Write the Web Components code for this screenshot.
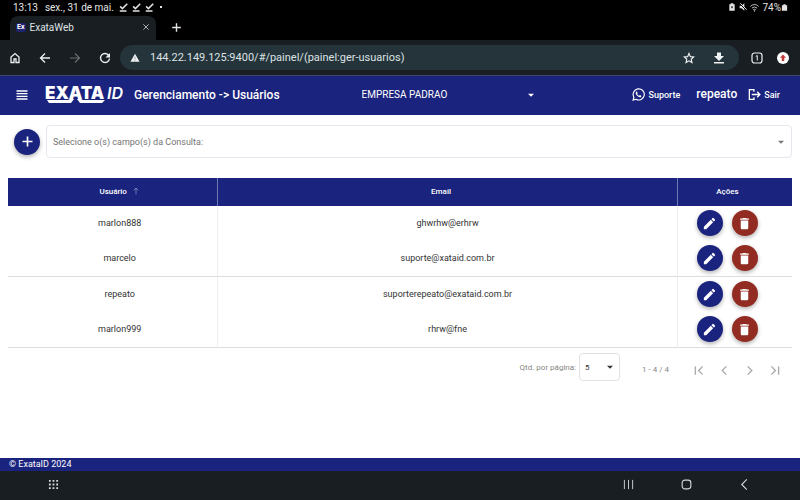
<!DOCTYPE html>
<html lang="pt-BR">
<head>
<meta charset="utf-8">
<meta name="viewport" content="width=device-width, initial-scale=1">
<title>ExataWeb</title>
<style>
  html, body { margin: 0; min-height: 100%; }
  body {
    --primary: #1a237e;
    --chrome: #191e22;
    --danger: #922b21;
    display: flex;
    background: #fff;
    color: #333;
    font-family: Roboto, "Liberation Sans", sans-serif;
    font-size: 9px;
  }
</style>
</head>
<body>
<tablet-screen></tablet-screen>

<script>
const define = (name, html, setup) => {
  const template = document.createElement('template');
  template.innerHTML = html;
  customElements.define(name, class extends HTMLElement {
    constructor() {
      super();
      this.attachShadow({ mode: 'open' }).append(template.content.cloneNode(true));
    }
    connectedCallback() { if (setup) setup(this, this.shadowRoot); }
  });
};

const ICONS = {
  home: '<path d="M4 21V10l8-7 8 7v11h-6v-7h-4v7z" fill="none" stroke="currentColor" stroke-width="2.600"/>',
  back: '<path d="M22 12H3M12 3l-9 9 9 9" fill="none" stroke="currentColor" stroke-width="2.600"/>',
  forward: '<path d="M2 12h19M12 3l9 9-9 9" fill="none" stroke="currentColor" stroke-width="2.200"/>',
  reload: '<path d="M19.5 7A9 9 0 1 0 21 13" fill="none" stroke="currentColor" stroke-width="2.800"/><path d="M22 2v9h-9z" fill="currentColor"/>',
  warning: '<path d="M12 2 1 21h22z" fill="currentColor"/><path d="M12 9v6M12 16.500v2" stroke="#24343a" stroke-width="1"/>',
  star: '<path d="m12 2.800 2.700 6.400 6.900.6-5.200 4.600 1.500 6.800-5.900-3.600-5.900 3.600 1.500-6.800L2.400 9.800l6.900-.6z" fill="none" stroke="currentColor" stroke-width="2.300"/>',
  download: '<path d="M8 1h8v7h6L12 18 2 8h6zM2 20h20v3H2z" fill="currentColor"/>',
  tabs: '<rect x="2" y="2" width="20" height="20" rx="5" fill="none" stroke="currentColor" stroke-width="2.400"/><path d="m9.500 9 3-2v10" fill="none" stroke="currentColor" stroke-width="2"/>',
  update: '<circle cx="12" cy="12" r="12" fill="#fff"/><path d="m12 5 6 6.500h-3.500V18h-5v-6.500H6z" fill="#c5393c"/>',
  close: '<path d="m4 4 16 16M20 4 4 20" stroke="currentColor" stroke-width="2.200"/>',
  plus: '<path d="M12 4v16M4 12h16" stroke="currentColor" stroke-width="2.600"/>',
  check: '<path d="m3 9 6 6L22 2M2 21.500h18" fill="none" stroke="currentColor" stroke-width="4"/>',
  battery: '<path d="M8 1h8v3h5v19H3V4h5z" fill="currentColor"/>',
  saver: '<path d="M8 1h8v3h4v19H4V4h4z" fill="currentColor"/><path d="M12 9v7M9 12.500h6" stroke="#000" stroke-width="2"/>',
  mute: '<path d="M2 8h6l8-7v22l-8-7H2z" fill="currentColor"/><path d="m2 2 20 20" stroke="#000" stroke-width="3"/><path d="m4 1 19 19" stroke="currentColor" stroke-width="3"/>',
  wifi: '<path d="M1 9q11-10 22 0M5 13.500q7-6 14 0M8.500 18q3.500-3 7 0" fill="none" stroke="currentColor" stroke-width="2.200"/><circle cx="12" cy="21" r="1.800" fill="currentColor"/>',
  menu: '<path d="M1 4h22M1 9.300h22M1 14.700h22M1 20h22" stroke="currentColor" stroke-width="2.600"/>',
  caret: '<path d="M3 8h18l-9 9z" fill="currentColor"/>',
  whatsapp: '<path d="M2 22.300 3.500 17A10.300 10.300 0 1 1 7.300 20.800z" fill="none" stroke="currentColor" stroke-width="2.100"/><path d="M7.300 7.600c.8-1.200 1.900-1.200 2.300-.2l.8 2-.9 1.500c.9 1.700 2 2.700 3.700 3.500l1.400-1.300 2.300 1.200c.8.5.2 2-.8 2.600-1.200.7-3.500.2-5.700-1.600-2.500-2.100-4.600-5.300-3.100-7.700z" fill="currentColor"/>',
  logout: '<path d="M11 7V3H2.500v18H11v-4M7 12h15M17 7l5 5-5 5" fill="none" stroke="currentColor" stroke-width="2.400"/>',
  sort: '<path d="M12 22V3M5 10l7-7 7 7" fill="none" stroke="currentColor" stroke-width="2.300"/>',
  pencil: '<path d="M3 17.250V21h3.750L17.810 9.940l-3.750-3.750zM20.710 7.040a1 1 0 0 0 0-1.410l-2.340-2.340a1 1 0 0 0-1.410 0l-1.830 1.830 3.750 3.750z" fill="currentColor"/>',
  trash: '<path d="M6 19c0 1.100.9 2 2 2h8a2 2 0 0 0 2-2V7H6zM19 4h-3.500l-1-1h-5l-1 1H5v2h14z" fill="currentColor"/>',
  first: '<path d="M3 3v18M19 3l-9 9 9 9" fill="none" stroke="currentColor" stroke-width="3"/>',
  prev: '<path d="m16 3-9 9 9 9" fill="none" stroke="currentColor" stroke-width="3"/>',
  next: '<path d="m8 3 9 9-9 9" fill="none" stroke="currentColor" stroke-width="3"/>',
  last: '<path d="M21 3v18M5 3l9 9-9 9" fill="none" stroke="currentColor" stroke-width="3"/>',
  apps: '<path d="M2 2h4v4H2zM10 2h4v4h-4zM18 2h4v4h-4zM2 10h4v4H2zM10 10h4v4h-4zM18 10h4v4h-4zM2 18h4v4H2zM10 18h4v4h-4zM18 18h4v4h-4z" fill="currentColor"/>',
  recents: '<path d="M3 2v20M12 2v20M21 2v20" stroke="currentColor" stroke-width="2"/>',
  square: '<rect x="2.500" y="2.500" width="19" height="19" rx="6" fill="none" stroke="currentColor" stroke-width="2.400"/>',
  chevron: '<path d="M17 1 6 12l11 11" fill="none" stroke="currentColor" stroke-width="2.400"/>'
};

define('ui-icon', `
<style>
  :host { display: inline-flex; flex: none; width: var(--icon-size, 12px); height: var(--icon-size, 12px); }
  svg { width: 100%; height: 100%; display: block; }
</style>
<svg viewBox="0 0 24 24" aria-hidden="true"></svg>`,
(host, root) => { root.querySelector('svg').innerHTML = ICONS[host.getAttribute('name')] || ''; });

define('icon-button', `
<style>
  :host { display: inline-flex; flex: none; }
  button { display: flex; align-items: center; gap: 3px; margin: 0; padding: 0; border: 0;
    background: none; color: inherit; font: inherit; cursor: pointer; }
</style>
<button type="button"><slot></slot></button>`,
(host, root) => { if (host.title) root.querySelector('button').setAttribute('aria-label', host.title); });

define('round-button', `
<style>
  :host { display: inline-flex; flex: none; --icon-size: 15px; }
  button { display: grid; place-items: center; width: 26px; height: 26px; padding: 0; border: 0;
    border-radius: 50%; background: var(--button-color, var(--primary)); color: #fff;
    box-shadow: 0 2px 4px rgba(0, 0, 0, .3); cursor: pointer; }
</style>
<button type="button"><ui-icon></ui-icon></button>`,
(host, root) => {
  root.querySelector('button').setAttribute('aria-label', host.getAttribute('label'));
  const icon = document.createElement('ui-icon');
  icon.setAttribute('name', host.getAttribute('icon'));
  root.querySelector('ui-icon').replaceWith(icon);
});

define('select-field', `
<style>
  :host { display: grid; align-items: center; min-width: 0; --icon-size: 8px; }
  select, ui-icon { grid-area: 1 / 1; }
  select { appearance: none; width: 100%; height: 100%; margin: 0; padding: 0 var(--field-pad, 0px);
    border: 0; background: none; color: inherit; font: inherit; }
  ui-icon { justify-self: end; margin-right: var(--field-pad, 0px); color: var(--caret-color, currentColor); pointer-events: none; }
</style>
<select></select><ui-icon name="caret"></ui-icon>`,
(host, root) => {
  const select = root.querySelector('select');
  select.setAttribute('aria-label', host.getAttribute('label'));
  select.replaceChildren(new Option(host.getAttribute('value')));
});

define('status-bar', `
<style>
  :host { display: flex; align-items: center; justify-content: space-between; height: 16px; box-sizing: border-box;
    padding: 0 12px 2px 13px; background: #000; color: #e4e4e4; font-size: 10px; --icon-size: 9px; }
  div { display: flex; align-items: center; gap: 4px; }
  .date { margin: 0 1px 0 3px; }
  .dot { width: 2px; height: 2px; margin-left: 2px; background: #e4e4e4; }
  .end { gap: 3px; }
  .power { gap: 0; --icon-size: 7px; }
  .saver { --icon-size: 8px; }
</style>
<div><span>13:13</span><span class="date">sex., 31 de mai.</span>
  <ui-icon name="check"></ui-icon><ui-icon name="check"></ui-icon><ui-icon name="check"></ui-icon><span class="dot"></span></div>
<div class="end"><ui-icon class="saver" name="saver"></ui-icon><ui-icon class="saver" name="mute"></ui-icon><ui-icon name="wifi"></ui-icon>
  <div class="power"><span>74%</span><ui-icon name="battery"></ui-icon></div></div>`);

define('tab-strip', `
<style>
  :host { display: flex; align-items: center; gap: 14px; height: 24px; box-sizing: border-box; padding-left: 10px; background: #000; color: #dfe3e5; font-size: 10px; }
  .tab { display: flex; align-items: center; box-sizing: border-box; flex: 0 1 146px; height: 100%;
    padding: 0 6px 2px; gap: 4px; border-radius: 8px 8px 0 0; background: var(--chrome); --icon-size: 8px; }
  .mark { padding: 1px; border-radius: 2px; background: #20236d; color: #fff; font-size: 7px; line-height: 7px; font-weight: 700; }
  .title { flex: 1; }
  .new { --icon-size: 13px; padding-bottom: 2px; }
</style>
<div class="tab"><span class="mark" aria-hidden="true">Ex</span><icon-button class="title">ExataWeb</icon-button>
  <icon-button title="Fechar guia"><ui-icon name="close"></ui-icon></icon-button></div>
<icon-button class="new" title="Nova guia"><ui-icon name="plus"></ui-icon></icon-button>`);

define('address-bar', `
<style>
  :host { display: flex; align-items: center; gap: 18px; height: 35px; padding: 0 11px 0 9px;
    background: var(--chrome); color: #eef1f2; border-bottom: 1px solid #3f466b; --icon-size: 12px; }
  .off { color: #69706f; }
  .field { display: flex; align-items: center; flex: 1; height: 25px; box-sizing: border-box; margin-left: -9px; margin-right: -6px;
    padding: 0 14px 0 10px; gap: 10px; border-radius: 13px; background: #24343a; --icon-size: 10px; }
  input { flex: 1; min-width: 0; padding: 0; border: 0; outline: 0; background: none; color: #dce2e4; font: inherit; font-size: 11px; }
  .tool { --icon-size: 12px; margin-left: 8px; }
  .update { margin-left: -4px; }
</style>
<icon-button title="Início"><ui-icon name="home"></ui-icon></icon-button>
<icon-button title="Voltar"><ui-icon name="back"></ui-icon></icon-button>
<icon-button class="off" title="Avançar"><ui-icon name="forward"></ui-icon></icon-button>
<icon-button title="Recarregar"><ui-icon name="reload"></ui-icon></icon-button>
<div class="field"><ui-icon name="warning"></ui-icon>
  <input type="text" aria-label="Endereço" value="144.22.149.125:9400/#/painel/(painel:ger-usuarios)">
  <icon-button class="tool" title="Favorito"><ui-icon name="star"></ui-icon></icon-button>
  <icon-button class="tool" title="Downloads"><ui-icon name="download"></ui-icon></icon-button></div>
<icon-button title="Guias"><ui-icon name="tabs"></ui-icon></icon-button>
<icon-button class="update" title="Atualizar"><ui-icon name="update"></ui-icon></icon-button>`);

define('exata-logo', `
<style>
  :host { display: block; flex: none; color: #fff; }
  svg { display: block; width: 80px; height: 30px; font-family: Inter, sans-serif; }
</style>
<svg viewBox="0 0 80 30" role="img" aria-label="EXATAID" fill="currentColor">
  <text x="0" y="19" font-size="17" font-weight="900">EXATA</text>
  <text x="62" y="19" font-size="16" font-weight="600" font-style="italic">ID</text>
  <path d="M2 20h21l2-1h4l-3 4H4zM32 19h4l2 1h22l-3 3H35z"/>
</svg>`);

define('app-header', `
<style>
  :host { display: grid; grid-template-columns: 346fr 174fr 245fr; align-items: center; height: 39px; box-sizing: border-box;
    padding: 0 20px 2px 16px; background: var(--primary); color: #fff; font-weight: 500; }
  .start { display: flex; align-items: center; gap: 9px; --icon-size: 12px; }
  .start exata-logo { margin-left: 8px; }
  h1 { margin: 0; font-size: 12px; font-weight: 500; white-space: nowrap; }
  select-field { height: 24px; font-size: 10px; font-weight: 400; }
  .end { display: flex; align-items: center; justify-content: flex-end; gap: 16px; --icon-size: 13px; }
  .user { font-size: 12px; margin-right: -5px; padding-bottom: 2px; }
</style>
<div class="start"><icon-button title="Menu"><ui-icon name="menu"></ui-icon></icon-button>
  <exata-logo></exata-logo><h1>Gerenciamento -&gt; Usuários</h1></div>
<select-field label="Empresa" value="EMPRESA PADRAO"></select-field>
<div class="end"><icon-button><ui-icon name="whatsapp"></ui-icon>Suporte</icon-button>
  <span class="user">repeato</span>
  <icon-button><ui-icon name="logout"></ui-icon>Sair</icon-button></div>`);

define('query-bar', `
<style>
  :host { display: flex; align-items: center; gap: 6px; padding: 10px 0 20px 6px; }
  select-field { flex: 1; box-sizing: border-box; height: 33px; border: 1px solid #e6e6ee; border-radius: 4px;
    color: #757575; --field-pad: 6px; }
</style>
<round-button label="Adicionar" icon="plus"></round-button>
<select-field label="Consulta" value="Selecione o(s) campo(s) da Consulta:"></select-field>`);

define('user-table', `
<style>
  :host { display: block; }
  table { width: 100%; border-collapse: separate; border-spacing: 0; table-layout: fixed; text-align: center; }
  .name { width: 26.700%; } .actions { width: 14.700%; }
  th { height: 28px; padding: 0 0 2px; box-sizing: border-box; background: var(--primary); color: #fff; font-size: 8px; font-weight: 500; }
  th + th { border-left: 1px solid #7278b0; }
  td { height: 35px; padding: 0 0 1px; box-sizing: border-box; }
  td + td { border-left: 1px solid #eee; }
  tr:nth-child(even) td { height: 36px; border-bottom: 1px solid #ddd; }
  tr > :nth-child(1) { padding-left: 14px; }
  th:nth-child(2) { padding-right: 13px; }
  .sort, .buttons { display: flex; justify-content: center; align-items: center; }
  .sort { --icon-size: 8px; }
  .sort ui-icon { margin-left: 2px; color: #8d92c4; }
  .buttons { gap: 9px; padding-right: 15px; }
  .delete { --button-color: var(--danger); }
</style>
<table>
  <colgroup><col class="name"><col><col class="actions"></colgroup>
  <thead><tr><th scope="col"><icon-button class="sort">Usuário<ui-icon name="sort"></ui-icon></icon-button></th>
    <th scope="col">Email</th><th scope="col"><div class="buttons">Ações</div></th></tr></thead>
  <tbody></tbody>
</table>`,
(host, root) => {
  const users = [['marlon888', 'ghwrhw@erhrw'], ['marcelo', 'suporte@xataid.com.br'],
    ['repeato', 'suporterepeato@exataid.com.br'], ['marlon999', 'rhrw@fne']];
  root.querySelector('tbody').innerHTML = users.map(([name, email]) => `
    <tr><td>${name}</td><td>${email}</td><td><div class="buttons">
      <round-button label="Editar ${name}" icon="pencil"></round-button>
      <round-button class="delete" label="Excluir ${name}" icon="trash"></round-button></div></td></tr>`).join('');
});

define('table-pager', `
<style>
  :host { display: flex; align-items: center; justify-content: flex-end; padding: 5px 12px 0 0; color: #858585; font-size: 8px; --icon-size: 11px; }
  .size { display: flex; align-items: center; gap: 3px; }
  select-field { box-sizing: border-box; width: 41px; height: 28px; border: 1px solid #e2e2e2; border-radius: 4px;
    color: #333; --field-pad: 5px; }
  .range { margin: 4px 25px 0 22px; }
  .steps { display: flex; gap: 14px; margin-top: 6px; color: #aaa; }
</style>
<div class="size"><span>Qtd. por página:</span><select-field label="Qtd. por página" value="5"></select-field></div>
<span class="range">1 - 4 / 4</span>
<div class="steps">
  <icon-button title="Primeira página"><ui-icon name="first"></ui-icon></icon-button>
  <icon-button title="Página anterior"><ui-icon name="prev"></ui-icon></icon-button>
  <icon-button title="Próxima página"><ui-icon name="next"></ui-icon></icon-button>
  <icon-button title="Última página"><ui-icon name="last"></ui-icon></icon-button></div>`);

define('app-footer', `
<style>
  :host { display: flex; align-items: center; height: 13px; box-sizing: border-box; padding: 0 9px 2px; background: var(--primary); color: #fff; }
</style>
<span>© ExataID 2024</span>`);

define('system-nav', `
<style>
  :host { display: grid; grid-template-columns: 1fr auto auto auto; gap: 47px; align-items: center; height: 29px; box-sizing: border-box;
    padding: 0 50px 2px 48px; background: var(--chrome); color: #d5d8da; --icon-size: 11px; }
</style>
<icon-button title="Aplicativos"><ui-icon name="apps"></ui-icon></icon-button>
<icon-button title="Recentes"><ui-icon name="recents"></ui-icon></icon-button>
<icon-button title="Tela inicial"><ui-icon name="square"></ui-icon></icon-button>
<icon-button title="Retornar"><ui-icon name="chevron"></ui-icon></icon-button>`);

define('tablet-screen', `
<style>
  :host { display: flex; flex-direction: column; flex: 1; min-width: 0; min-height: 100vh; }
  main { flex: 1; padding: 0 8px; }
</style>
<status-bar></status-bar>
<tab-strip></tab-strip>
<address-bar></address-bar>
<app-header></app-header>
<main><query-bar></query-bar><user-table></user-table><table-pager></table-pager></main>
<app-footer></app-footer>
<system-nav></system-nav>`);
</script>
</body>
</html>
